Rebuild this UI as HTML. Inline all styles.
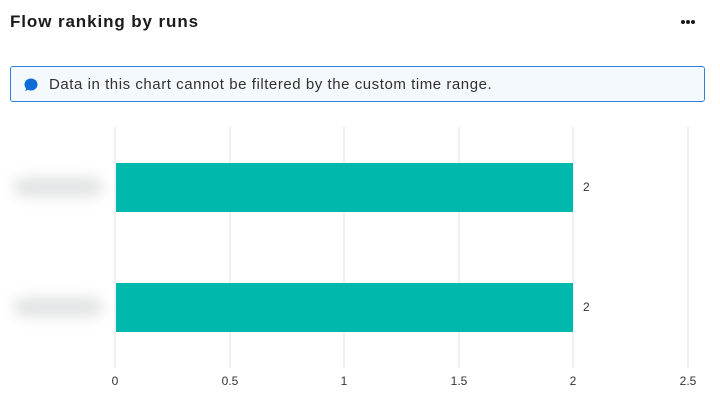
<!DOCTYPE html>
<html><head><style>
*{margin:0;padding:0;box-sizing:border-box}
body{width:720px;height:403px;background:#fff;font-family:"Liberation Sans",sans-serif;position:relative;overflow:hidden;color:#242424}
.t{position:absolute;left:10px;top:12px;font-size:17px;font-weight:bold;color:#1b1b1b;letter-spacing:0.9px}
.d{position:absolute;top:20px;width:4px;height:4px;border-radius:50%;background:#1b1b1b}
.banner{position:absolute;left:10px;top:66px;width:695px;height:36px;border:1px solid #2f7fe0;border-radius:3px;background:#f4f9fd;font-size:15px;color:#323130;letter-spacing:0.55px}
.banner span{position:absolute;left:38px;top:9px}
.g{position:absolute;top:127px;height:241px;width:2px;background:#f0f0f0}
.bar{position:absolute;left:116px;width:457px;height:49px;background:#00b9ac}
.v{position:absolute;left:583px;font-size:12px;color:#333}
.x{position:absolute;top:374px;font-size:12px;color:#333;transform:translateX(-50%)}
.bl{position:absolute;left:14px;width:88px;height:18px;background:#e0e1e2;filter:blur(7px);border-radius:8px}
</style></head><body>
<div class="t">Flow ranking by runs</div>
<div class="d" style="left:681px"></div><div class="d" style="left:686px"></div><div class="d" style="left:691px"></div>
<div class="banner">
<svg style="position:absolute;left:12px;top:11px" width="15" height="14" viewBox="0 0 15 14"><ellipse cx="8" cy="6.5" rx="6.5" ry="6" fill="#0f6cd6"/><path d="M2 13 L4 9 L7 11 Z" fill="#0f6cd6"/></svg>
<span>Data in this chart cannot be filtered by the custom time range.</span></div>
<div class="g" style="left:114px"></div>
<div class="g" style="left:229px"></div>
<div class="g" style="left:343px"></div>
<div class="g" style="left:458px"></div>
<div class="g" style="left:572px"></div>
<div class="g" style="left:687px"></div>
<div class="bar" style="top:163px"></div>
<div class="bar" style="top:283px"></div>
<div class="v" style="top:180px">2</div>
<div class="v" style="top:300px">2</div>
<div class="bl" style="top:178px"></div>
<div class="bl" style="top:298px"></div>
<div class="x" style="left:115px">0</div>
<div class="x" style="left:230px">0.5</div>
<div class="x" style="left:344px">1</div>
<div class="x" style="left:459px">1.5</div>
<div class="x" style="left:573px">2</div>
<div class="x" style="left:688px">2.5</div>
</body></html>
